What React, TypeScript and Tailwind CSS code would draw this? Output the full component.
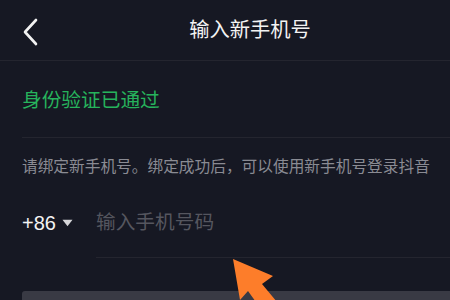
import React from "react";

export default function App() {
  const font = { fontFamily: '"Liberation Sans", "Noto Sans CJK SC", sans-serif' };
  return (
    <div className="w-[450px] h-[300px] overflow-hidden bg-[#161823] relative" style={font}>
      <div className="w-[500px] flex flex-col">
        <div className="h-[61px] flex items-center justify-center relative border-b border-[#24252f]">
          <svg className="absolute left-[20px] top-[17px]" width="22" height="30" viewBox="0 0 22 30">
            <path d="M16 3 L5 15 L16 27" fill="none" stroke="#f2f2f2" strokeWidth="2.6" strokeLinecap="round" strokeLinejoin="round" />
          </svg>
          <span className="text-[20.3px] leading-[24px] text-[#f3f3f3]">输入新手机号</span>
        </div>
        <div className="pl-[22px]">
          <div className="h-[77px] flex items-center border-b border-[#24252f]">
            <span className="text-[19.7px] leading-[24px] text-[#26b35c] pt-[2px]">身份验证已通过</span>
          </div>
          <div className="pt-[18px] text-[15.7px] leading-[22px] text-[#8a8b93]">
            请绑定新手机号。绑定成功后，可以使用新手机号登录抖音
          </div>
          <div className="mt-[22px] flex items-stretch">
            <div className="w-[74px] flex items-center pb-[23px] pt-[10px]">
              <span className="text-[20px] leading-[24px] text-[#f3f3f3]">+86</span>
              <svg className="ml-[6px]" width="11" height="8" viewBox="0 0 11 8">
                <path d="M0.5 0.8 L10.5 0.8 L5.5 7.2 Z" fill="#d6d6d9" />
              </svg>
            </div>
            <div className="flex-1 border-b border-[#24252f] pb-[23px] pt-[10px] flex items-center">
              <span className="text-[19.7px] leading-[24px] text-[#55565f]">输入手机号码</span>
            </div>
          </div>
          <div className="mt-[33px] mr-[22px] h-[48px] rounded-[3px] bg-[#393a44]" />
        </div>
      </div>
      <svg className="absolute left-0 top-0 pointer-events-none" width="450" height="300" viewBox="0 0 450 300">
        <polygon points="233,259 273,276 262,284 282,308 266,316 248,291 240,300" fill="#fd7d2a" />
      </svg>
    </div>
  );
}
